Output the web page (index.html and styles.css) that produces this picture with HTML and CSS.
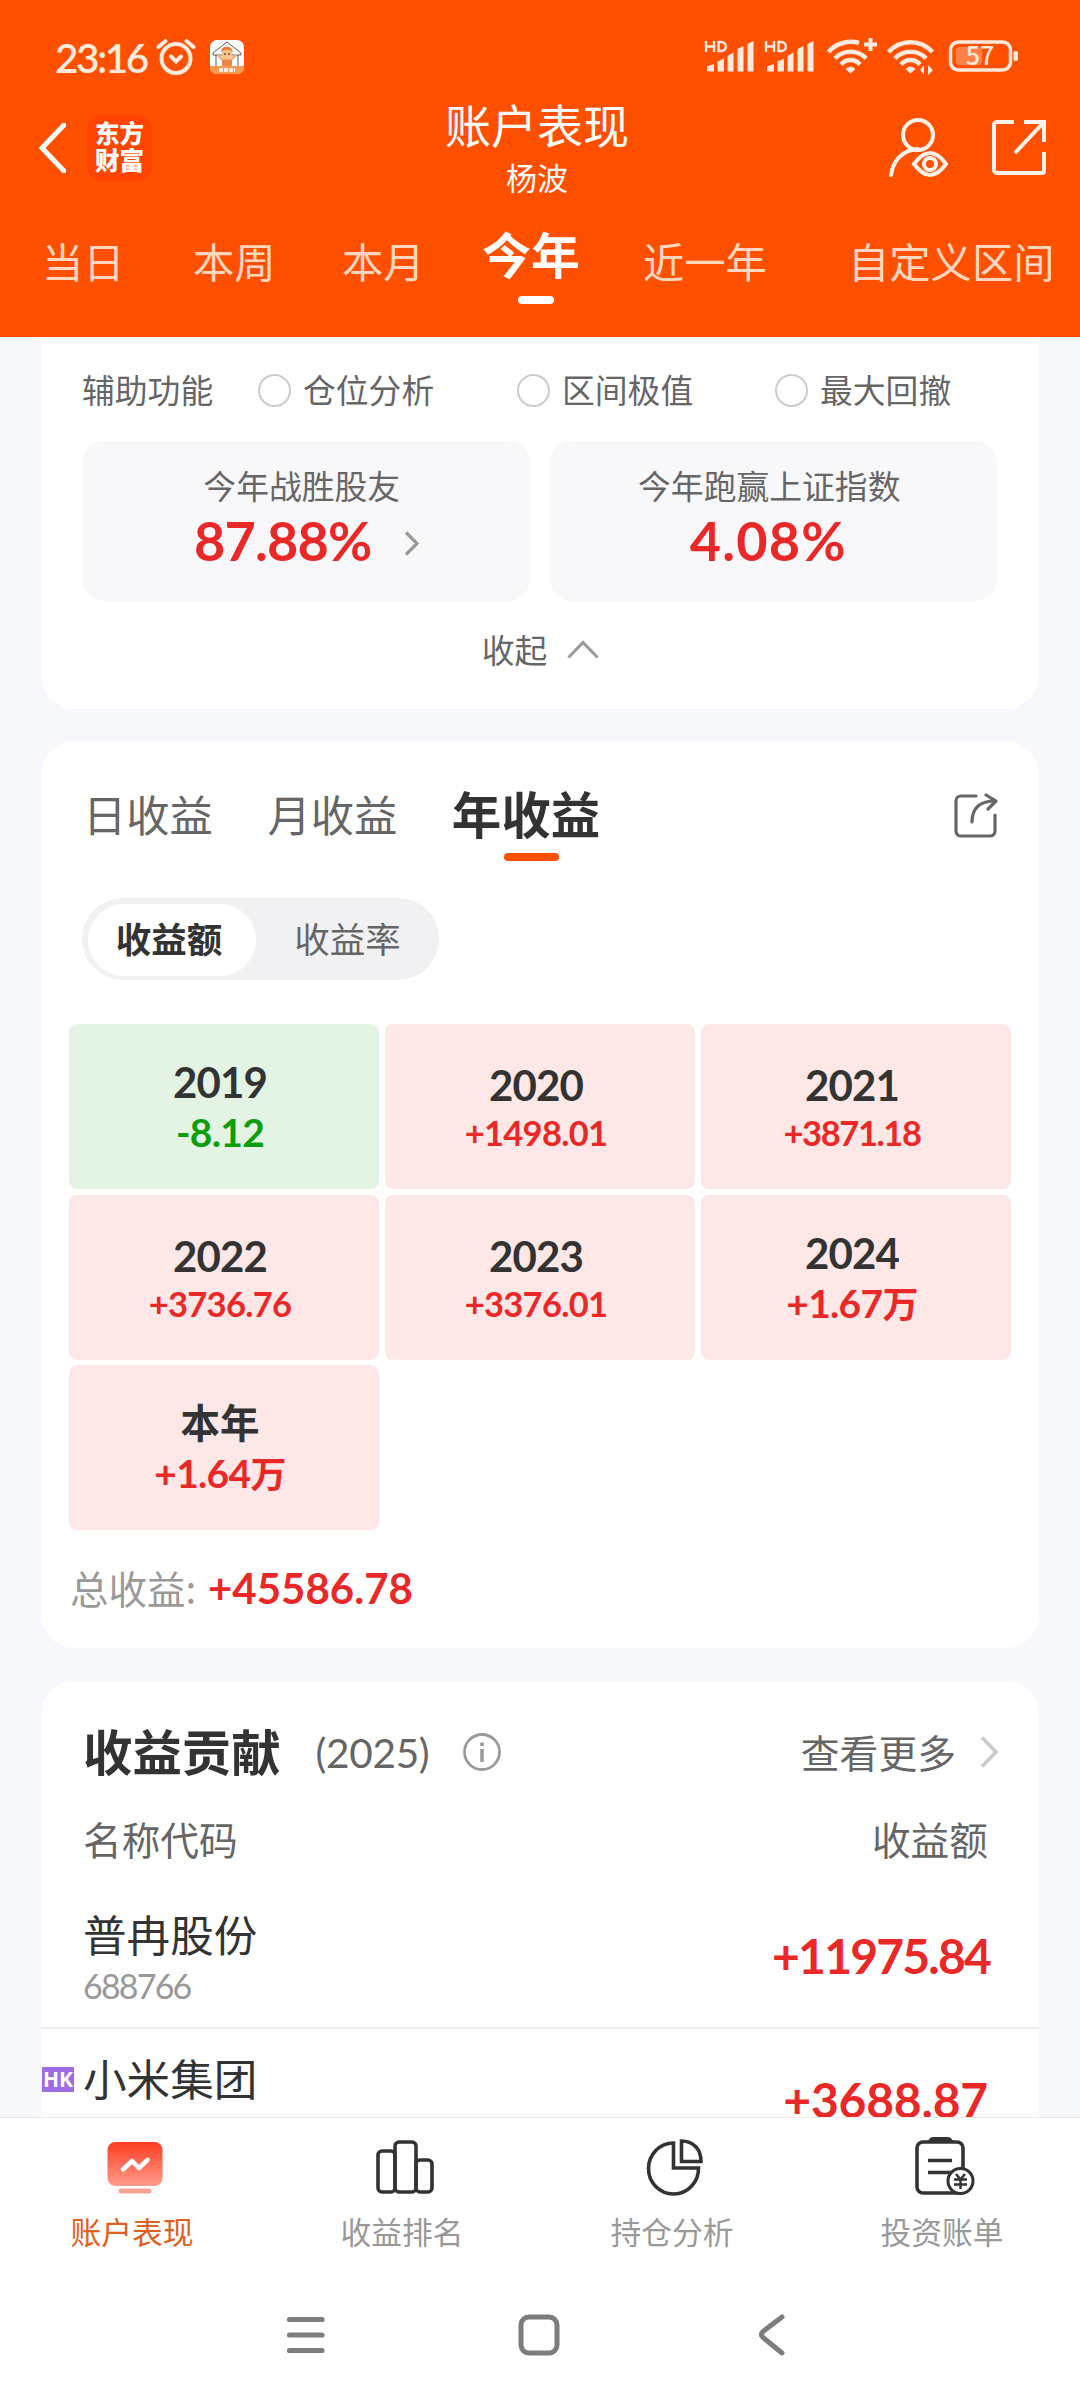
FILE: index.html
```html
<!DOCTYPE html>
<html lang="zh-CN">
<head>
<meta charset="utf-8">
<title>账户表现</title>
<link rel="stylesheet" href="styles.css">
</head>
<body>
<header class="header">
  <div class="status">
    <span class="clock num">23:16</span>
    <svg class="alarm" width="40" height="38" viewBox="0 0 40 38" fill="none" stroke="#ffeadd" stroke-width="4" stroke-linecap="round"><circle cx="20" cy="20.500" r="14.500"/><path d="M2.500 9 9.500 3M37.500 9 30.500 3M15 18.500l5 5 5-5"/></svg>
    <svg class="app" width="34" height="34" viewBox="0 0 34 34"><rect width="34" height="34" rx="7" fill="#fff"/><path d="M0 26h34v1a7 7 0 0 1-7 7H7a7 7 0 0 1-7-7z" fill="#f79a50"/><path d="M3 13 17 2l14 11v2H3zM6 15v11M28 15v11" fill="none" stroke="#665a55"/><circle cx="17" cy="14" r="5.500" fill="#f8c48e"/><path d="M11 12c0-7 11-7 12 0-4-3-8-3-12 0z" fill="#ef7a35"/><path d="M8 15l5 5h8l5-5" fill="none" stroke="#f3b078" stroke-width="2.500"/><path d="M12 20h10v6H12z" fill="#ef8540"/><circle cx="15" cy="14" r=".8"/><circle cx="19" cy="14" r=".8"/><path d="M9 30h16" stroke="#fff" stroke-width="4" stroke-dasharray="4 1" opacity=".8"/></svg>
    <svg class="sig" width="316" height="40" viewBox="0 0 316 40" fill="#ffeadd">
      <g id="cell"><g fill="none" stroke="#ffeadd" stroke-width="2.400"><path d="M2 4v11M10 4v11M2 9.500h8M14.500 5v9h2.500c6.500 0 6.500-9 0-9z"/></g><path d="M3 29.500 10 27v7.500H3zM13.500 24.500l6.500-3v13h-6.500zM23.500 19l6-3.500v19h-6zM33.500 12l6-3v25.500h-6zM43.500 7l6-3v30.500h-6z"/></g>
      <use href="#cell" x="60"/>
      <g fill="none" stroke="#ffeadd" stroke-width="4.500"><path d="M124.500 15C132 6 145 3 155 6M131 21.500c8-9 23-9 31 0M137 27.500c5-6 14-6 19 0"/><path d="M184.500 15c12-13 32-13 44 0M191 21.500c8-9 23-9 31 0M197 27.500c5-6 14-6 19 0"/><path d="M160 7.500h13M166.500 1v13" stroke-width="4"/></g>
      <path d="M141.500 32q5-5 10 0l-5 4.500zM201.500 32q5-5 10 0l-5 4.500zM220 28v10l-4-5zM224 38V28l5 5z"/>
      <rect x="246.500" y="5" width="60" height="28" rx="8" fill="none" stroke="#ffeadd" stroke-width="3.500"/><rect x="252" y="10" width="26" height="18" rx="4" fill="#ff8147"/><rect x="309.500" y="14" width="4.500" height="10" rx="2"/>
      <text x="276" y="28" class="batt" text-anchor="middle">57</text>
    </svg>
  </div>
  <div class="titlebar">
    <div class="side">
      <svg class="back" width="28" height="50" viewBox="0 0 28 50" fill="none" stroke="#fff" stroke-width="5"><path d="M26 2 4 25l22 23" stroke-linecap="round"/></svg>
      <div class="logo">东方<br>财富</div>
    </div>
    <div class="titles"><h1>账户表现</h1><p>杨波</p></div>
    <div class="side right">
      <svg width="60" height="62" viewBox="0 0 60 62" fill="none" stroke="#fff2ea" stroke-width="4" stroke-linecap="round"><circle cx="30" cy="18" r="15"/><path d="M3 58C5 44 14 33 30 32M26 47q16-22 32 0-16 22-32 0z"/><circle cx="42" cy="47" r="6"/></svg>
      <svg width="56" height="57" viewBox="0 0 56 57" fill="none" stroke="#fff2ea" stroke-width="4"><path d="M23 3H6a3 3 0 0 0-3 3v45a3 3 0 0 0 3 3h45a2 2 0 0 0 2-2V33M33 3h20v20M53 3 24 34"/></svg>
    </div>
  </div>
  <nav class="periods"><span>当日</span><span>本周</span><span>本月</span><span class="on">今年</span><span>近一年</span><span>自定义区间</span></nav>
</header>
<main class="content">
  <section class="card assist">
    <div class="options"><span>辅助功能</span><label><i></i>仓位分析</label><label><i></i>区间极值</label><label><i></i>最大回撤</label></div>
    <div class="stats">
      <div class="stat"><p>今年战胜股友</p><b class="num">87.88%</b><svg width="16" height="25" viewBox="0 0 16 25" fill="none" stroke="#999" stroke-width="3.200"><path d="M2 1.500 13 12.500 2 23.500"/></svg></div>
      <div class="stat"><p>今年跑赢上证指数</p><b class="num">4.08%</b></div>
    </div>
    <div class="fold">收起<svg width="32" height="19" viewBox="0 0 32 19" fill="none" stroke="#999" stroke-width="3"><path d="M1.500 17.500 16 2.500l14.500 15"/></svg></div>
  </section>
  <section class="card income">
    <div class="tabs"><span>日收益</span><span>月收益</span><span class="on">年收益</span>
      <svg width="46" height="46" viewBox="0 0 46 46" fill="none" stroke="#666" stroke-width="3.200" stroke-linecap="round" stroke-linejoin="round"><path d="M23 3H8a5 5 0 0 0-5 5v30a5 5 0 0 0 5 5h29a5 5 0 0 0 5-5V22M19 29C19 16 26 8 42 8M33 2l10 6-8 8"/></svg>
    </div>
    <div class="switch"><span class="on">收益额</span><span>收益率</span></div>
    <div class="years">
      <div class="year big loss"><b class="num">2019</b><em class="num">-8.12</em></div>
      <div class="year"><b class="num">2020</b><em class="num">+1498.01</em></div>
      <div class="year"><b class="num">2021</b><em class="num tight">+3871.18</em></div>
      <div class="year"><b class="num">2022</b><em class="num">+3736.76</em></div>
      <div class="year"><b class="num">2023</b><em class="num">+3376.01</em></div>
      <div class="year big"><b class="num">2024</b><em class="num">+1.67<span class="wan">万</span></em></div>
      <div class="year big"><b class="cn">本年</b><em class="num">+1.64<span class="wan">万</span></em></div>
    </div>
    <div class="total"><span>总收益:</span><b class="num">+45586.78</b></div>
  </section>
  <section class="card contrib">
    <div class="chead"><h2>收益贡献</h2><span class="num yr">(2025)</span>
      <svg width="38" height="38" viewBox="0 0 38 38" fill="none" stroke="#999" stroke-width="2.800"><circle cx="19" cy="19" r="17.500"/><path d="M19 16v13M19 9.500v3.500" stroke-width="3.500"/></svg>
      <span class="more">查看更多</span>
      <svg class="arr" width="19" height="32" viewBox="0 0 19 32" fill="none" stroke="#ccc" stroke-width="3.600"><path d="M2 1.500 16 16 2 30.500"/></svg>
    </div>
    <div class="cols"><span>名称代码</span><span>收益额</span></div>
    <div class="stock"><div><p>普冉股份</p><small class="num">688766</small></div><b class="num">+11975.84</b></div>
    <div class="stock second"><i class="hk">HK</i><div><p>小米集团</p></div><b class="num">+3688.87</b></div>
  </section>
</main>
<footer class="bottom">
  <nav class="tabbar">
    <a class="on"><svg width="60" height="60" viewBox="0 0 60 60"><defs><linearGradient id="red" x2="0" y2="1"><stop stop-color="#ff3d22"/><stop offset="1" stop-color="#ff9c8c"/></linearGradient></defs><rect x="2.500" y="5" width="55" height="44" rx="8" fill="url(#red)"/><rect x="13.500" y="51.500" width="33" height="5" rx="2.500" fill="#f6a294"/><path d="M18 32.500l9-8.500 7 7 8.500-8" fill="none" stroke="#fff" stroke-width="4.500" stroke-linecap="round" stroke-linejoin="round"/></svg>账户表现</a>
    <a><svg width="60" height="60" viewBox="0 0 60 60" fill="none" stroke="#333" stroke-width="3.600"><rect x="3" y="14" width="17" height="41" rx="4"/><rect x="20" y="5" width="21" height="50" rx="4"/><rect x="41" y="23" width="16" height="32" rx="4"/></svg>收益排名</a>
    <a><svg width="60" height="60" viewBox="0 0 60 60" fill="none" stroke="#333" stroke-width="3.600"><path d="M28.500 6A25 25.500 0 1 0 53.500 31H28.500z"/><path d="M36.500 4v20.500h19.500C56 12 48 4 36.500 4z"/></svg>持仓分析</a>
    <a><svg width="66" height="62" viewBox="0 0 66 62" fill="none" stroke="#333" stroke-width="3.600"><path d="M51 35V12a6 6 0 0 0-6-6H11a6 6 0 0 0-6 6v39a6 6 0 0 0 6 6h36M16 24.500h24M16 36.500h23" /><path d="M18 4.500q1-2 3-2h15q2 0 3 2z" stroke-width="3" fill="#333"/><circle cx="48.500" cy="45" r="12.500" fill="#fff" stroke-width="3"/><path d="M44 38l4.500 5.500L53 38M48.500 43.500V53M42 43.500h13M42 48.500h13" stroke-width="2.500"/></svg>投资账单</a>
  </nav>
  <div class="sysnav">
    <svg width="40" height="42" viewBox="0 0 40 42" stroke="#7d7d7d" stroke-width="5.200" stroke-linecap="round"><path d="M3.500 5.500h32.500M3.500 21h32.500M3.500 36.500h32.500"/></svg>
    <svg width="42" height="42" viewBox="0 0 42 42" fill="none" stroke="#7d7d7d" stroke-width="5"><rect x="3" y="3" width="36" height="36" rx="8"/></svg>
    <svg width="28" height="44" viewBox="0 0 28 44" fill="none" stroke="#7d7d7d" stroke-width="5" stroke-linecap="round"><path d="M24 4 5 18.500q-3 3 0 6L24 40"/></svg>
  </div>
</footer>
</body>
</html>
```
FILE: styles.css
```css
* { box-sizing: border-box; margin: 0; padding: 0; }
body { width: 1080px; height: 2400px; overflow: hidden; background: #f6f8fb; color: #333; font-family: "Noto Sans CJK SC", sans-serif; display: flex; flex-direction: column; }
svg { display: block; flex: none; }
i, em { font-style: normal; }
span, p, b, h1, h2, a, small, label { white-space: nowrap; }
.num { font-family: Lato, "Noto Sans CJK SC", sans-serif; }

.header { height: 337px; flex: none; background: #ff5000; color: #fff; }
.status { height: 98px; padding: 16px 60px 0 55px; display: flex; align-items: center; color: #ffeadd; }
.clock { font-size: 40.5px; font-weight: 600; width: 101px; letter-spacing: -2.5px; }
.app { margin-left: 14px; }
.sig { margin-left: auto; }
.batt { font: 600 25px "Noto Sans CJK SC", sans-serif; font-weight: 500; }
.titlebar { height: 110px; display: grid; grid-template-columns: 300px 1fr 300px; padding: 0 33px 0 38px; }
.side { display: flex; align-items: center; height: 99px; }
.side.right { justify-content: flex-end; gap: 43px; }
.logo { width: 65px; height: 66px; margin-left: 21px; border-radius: 14px; background: #ff4400; text-align: center; font-size: 24.5px; line-height: 27.5px; font-weight: 900; padding-top: 4px; }
.titles { text-align: center; padding-right: 11px; }
.titles h1 { font-size: 46px; line-height: 50px; font-weight: 400; }
.titles p { font-size: 31px; line-height: 40px; margin-top: 9px; }
.periods { height: 129px; display: grid; grid-template-columns: 151px 149px 140px 161px 205px 210px; padding-left: 42px; font-size: 41.3px; line-height: 104px; color: #ffd6c0; }
.periods .on { font-size: 49px; line-height: 90px; font-weight: 700; color: #fff; }
.periods .on::after { content: ""; display: block; width: 36px; height: 8px; border-radius: 4px; background: #fff; margin: -2px 0 0 36px; }

.content { flex: none; height: 1780px; overflow: hidden; padding: 0 41px; }
.card { background: #fff; border-radius: 33px; margin-bottom: 33px; }
.assist { height: 371px; border-radius: 0 0 33px 33px; color: #666; font-size: 32.8px; padding: 30px 42px 0 41px; }
.options { height: 44px; display: grid; grid-template-columns: 176px 259px 258px 1fr; line-height: 44px; }
.options label { display: flex; align-items: center; }
.options i { width: 33px; height: 33px; border: 2.8px solid #ccc; border-radius: 50%; margin: 3px 12px 0 0; }
.stats { display: flex; gap: 20px; margin-top: 30px; }
.stat { flex: 1; height: 160px; border-radius: 22px; background: #f8f8fb; display: grid; grid-template-columns: 1fr auto 1fr; align-content: start; align-items: center; padding-top: 20px; }
.stat p { grid-column: 1 / -1; line-height: 48px; text-align: center; padding-right: 8px; }
.stat b { grid-column: 2; font-size: 54px; line-height: 64px; color: #eb2828; letter-spacing: -.8px; }
.stat:nth-child(1) { grid-template-columns: 112px auto 1fr; }
.stat:nth-child(1) b { width: 210px; }
.stat:nth-child(2) b { margin-right: 10px; letter-spacing: 1.2px; }
.stat svg { margin-top: 4px; }
.fold { display: flex; justify-content: center; align-items: center; gap: 20px; margin-top: 24px; line-height: 48px; padding-left: 2px; }

.income { height: 907px; padding: 43px 28px 0; }
.tabs { display: flex; align-items: center; height: 58px; padding: 0 12px 0 14px; font-size: 43.3px; color: #666; line-height: 58px; }
.tabs span + span { margin-left: 54.5px; }
.tabs .on { font-size: 49.500px; font-weight: 700; color: #333; position: relative; }
.tabs .on::after { content: ""; position: absolute; left: 52px; top: 69px; width: 55px; height: 8px; border-radius: 4px; background: #ff5000; }
.tabs svg { margin-left: auto; margin-top: 6px; }
.switch { width: 357px; height: 82px; margin: 56px 0 0 13px; border-radius: 41px; background: #f1f1f4; padding: 6px 6px 4px; display: flex; font-size: 35.500px; line-height: 67px; color: #666; }
.switch span { flex: 0 0 168px; text-align: center; }
.switch span + span { flex: 1; padding-left: 6px; }
.switch .on { background: #fff; border-radius: 36px; font-weight: 700; color: #333; padding-right: 6px; }
.years { display: grid; grid-template-columns: repeat(3, 310px); grid-auto-rows: 165px; gap: 5.6px 6px; margin-top: 44px; }
.year { border-radius: 8px; background: #fde8e7; display: flex; flex-direction: column; text-align: center; padding: 36px 8px 0 0; }
.year b { font-size: 42px; line-height: 50px; letter-spacing: -.9px; }
.year em { font-size: 34.500px; line-height: 46px; font-weight: 700; color: #eb2828; letter-spacing: -.7px; }
.year em.tight { letter-spacing: -1.4px; }
.year.big { padding-top: 33px; }
.year.big em { font-size: 39px; line-height: 50px; }
.year .cn { font-size: 39.5px; font-weight: 600; letter-spacing: 0; line-height: 48px; height: 50px; margin-top: -1px; margin-bottom: 1px; }
.wan { font-size: 36px; line-height: 1; }
.year.loss { background: #e4f4e4; }
.year.loss em { color: #0b9e0b; }
.total { display: flex; align-items: center; height: 60px; margin-top: 27px; line-height: 60px; font-size: 38.5px; color: #999; }
.total span { width: 139px; padding-left: 1px; }
.total b { font-size: 42px; color: #eb2828; padding-top: 2px; }

.contrib { height: 700px; padding: 39px 0 0; }
.chead { display: flex; align-items: center; height: 64px; padding: 0 40px 0 42px; }
.chead h2 { font-size: 49.400px; line-height: 58px; padding-bottom: 4px; }
.yr { font-size: 40.500px; color: #666; margin-left: 35px; letter-spacing: -.3px; }
.chead svg { margin-left: 34px; }
.more { font-size: 38.8px; line-height: 58px; color: #666; margin-left: auto; padding-bottom: 3px; }
.chead .arr { margin-left: 24px; }
.cols { display: flex; justify-content: space-between; padding: 0 51px 0 42px; font-size: 38.7px; line-height: 58px; color: #666; margin-top: 25px; }
.stock { height: 161px; display: flex; justify-content: space-between; border-bottom: 2px solid #eee; margin-top: 1px; padding: 40px 51px 0 42px; position: relative; }
.stock p { font-size: 43.6px; line-height: 50px; }
.stock small { display: block; font-size: 34px; line-height: 44px; color: #999; margin-top: 6px; letter-spacing: -1.8px; }
.stock b { font-size: 48px; line-height: 60px; margin-top: 18px; color: #eb2828; letter-spacing: -1.8px; margin-right: -2px; }
.stock.second { padding-top: 23px; margin-top: 0; }
.stock.second b { letter-spacing: -.2px; margin-right: 0; }
.hk { position: absolute; left: 1px; top: 38px; width: 32px; height: 25px; background: #a06ce2; color: #fff; font: 700 21px/25px "Noto Sans", sans-serif; text-align: center; }

.bottom { flex: 1; background: #fff; border-top: 1px solid #e8e8e8; position: relative; }
.tabbar { display: grid; grid-template-columns: repeat(4, 270px); height: 148px; padding-top: 18px; }
.tabbar a { display: flex; flex-direction: column; align-items: center; font-size: 30.800px; line-height: 44px; color: #999; padding-right: 6px; }
.tabbar svg { margin-left: 6px; height: 62px; margin-bottom: 11px; }
.tabbar .on { color: #dd6222; }
.sysnav { display: grid; grid-template-columns: 232px 240px auto; align-items: center; height: 138px; padding-left: 286px; }
```
